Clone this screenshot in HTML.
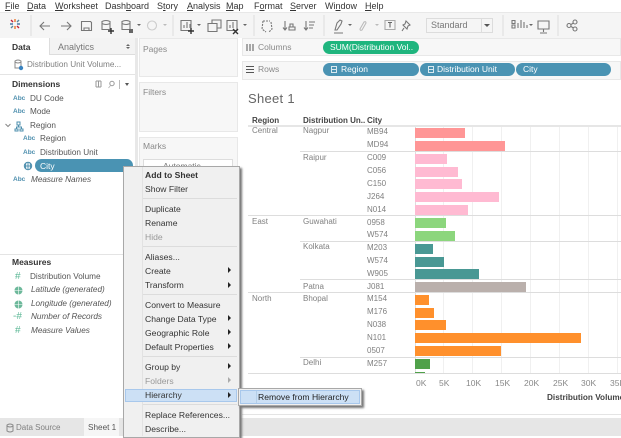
<!DOCTYPE html>
<html><head><meta charset="utf-8">
<style>
html,body{margin:0;padding:0}
body{width:621px;height:436px;position:relative;overflow:hidden;background:#fff;font-family:"Liberation Sans",sans-serif;font-size:9px;color:#555}
.a,.t,.b,.l{position:absolute}
.t{white-space:nowrap;line-height:12px;height:12px}
.m{color:#333;font-size:9px}
.u{text-decoration:underline}
.c{color:#808080;font-size:8px}
.h{color:#444;font-weight:bold;font-size:8px}
.b{height:10px;left:415px}
.l{height:1px;background:#ddd}
.g{position:absolute;top:126px;width:1px;height:247px;background:#f0f0f0}
.p{position:absolute;background:#f7f7f7;border:1px solid #e8e8e8;box-sizing:border-box}
.k{color:#8a8a8a;font-size:8.500px}
.f{color:#555;font-size:8.200px}
.i{font-style:italic}
.ab{color:#4e8fae;font-size:6.500px;font-weight:bold}
.n{color:#5cb896;font-size:10px}
.mi{color:#333;font-size:8.600px;left:145px}
.ar{position:absolute;left:228px;width:0;height:0;border-left:3px solid #222;border-top:3px solid transparent;border-bottom:3px solid transparent}
.sp{position:absolute;left:143px;width:94px;height:1px;background:#dcdcdc}
.pill{position:absolute;height:13px;border-radius:7px;background:#4a93b3;color:#fff;font-size:8.500px;line-height:13px;white-space:nowrap}
.ax{color:#888;font-size:8.500px}
.dh{font-weight:bold;font-size:8.500px;color:#333}
</style></head><body>

<!-- menu bar -->
<div class="t m" style="left:5px;top:0"><span class="u">F</span>ile</div>
<div class="t m" style="left:27px;top:0"><span class="u">D</span>ata</div>
<div class="t m" style="left:55px;top:0"><span class="u">W</span>orksheet</div>
<div class="t m" style="left:105px;top:0">Dash<span class="u">b</span>oard</div>
<div class="t m" style="left:157px;top:0">S<span class="u">t</span>ory</div>
<div class="t m" style="left:187px;top:0"><span class="u">A</span>nalysis</div>
<div class="t m" style="left:226px;top:0"><span class="u">M</span>ap</div>
<div class="t m" style="left:254px;top:0">F<span class="u">o</span>rmat</div>
<div class="t m" style="left:290px;top:0"><span class="u">S</span>erver</div>
<div class="t m" style="left:325px;top:0">Wi<span class="u">n</span>dow</div>
<div class="t m" style="left:365px;top:0"><span class="u">H</span>elp</div>

<!-- toolbar -->
<div class="a" style="left:0;top:12px;width:621px;height:26px;background:#f5f5f5;border-top:1px solid #e8e8e8;box-sizing:border-box"></div>
<svg class="a" style="left:0;top:12px" width="621" height="26" viewBox="0 12 621 26" fill="none" stroke="#777" stroke-width="1.1">
<g stroke-width="1.400"><path d="M15 19v3M15 26v3" stroke="#e8762d"/><path d="M10 24h3M17 24h3" stroke="#4e79a7"/><path d="M11 20l2 2M17 26l2 2" stroke="#c72037"/><path d="M19 20l-2 2M13 26l-2 2" stroke="#59879b"/></g>
<path d="M31 15v21M173 15v21M254 15v21M324 15v21M503 15v21M558 15v21" stroke="#ddd" stroke-width="1"/>
<path d="M40 26h10M44 22l-4 4 4 4"/><path d="M61 26h10M67 22l4 4-4 4"/>
<path d="M81.500 21.500h9l1 1v8h-10zM84 31v-3h5v3"/>
<path d="M102 21.500q4-2 8 0v8h-8zM102 23.500q4 2 8 0"/><path d="M108 31h6M111 28v6" stroke="#333" stroke-width="1.400"/>
<path d="M122 21.500q4-2 8 0v8h-8zM122 23.500q4 2 8 0"/><path d="M129 29h4v4h-4z" fill="#666" stroke="none"/>
<path d="M137 24h4l-2 2z" fill="#666" stroke="none"/>
<circle cx="152" cy="25.500" r="4.500" stroke="#ccc"/><path d="M163 24h4l-2 2z" fill="#bbb" stroke="none"/>
<path d="M181 20.500h10v10h-10zM184 28v-3M187 28v-6M190 28v-4"/><path d="M188 31h6M191 28v6" stroke="#333" stroke-width="1.400"/>
<path d="M197 24h4l-2 2z" fill="#666" stroke="none"/>
<path d="M208 23.500h9v8h-9zM212 23v-3h9v8h-4"/>
<path d="M227 20.500h10v10h-10zM230 28v-3M233 28v-6"/><path d="M233 29l5 5M238 29l-5 5" stroke="#333" stroke-width="1.400"/>
<path d="M243 24h4l-2 2z" fill="#666" stroke="none"/>
<path d="M263 21h7M263 21l-1 8 4 3M271 22l1 7-3 3" stroke-dasharray="2 1"/>
<path d="M285 21v9M283 27.500l2 2.500 2-2.500M289 30h6v-3h-6zM290 27v-3h3v3"/>
<path d="M306 21v9M304 27.500l2 2.500 2-2.500M309 22h6M309 25h5M309 28h4"/>
<path d="M335 30l2-7 3-3 2 1-1 3-4 6zM334 33h9"/><path d="M348 24h4l-2 2z" fill="#666" stroke="none"/>
<path d="M360 29l4-7q2-1 2 1l-4 7q-2 1-2-1z" stroke="#bbb"/><path d="M375 24h4l-2 2z" fill="#bbb" stroke="none"/>
<path d="M385 20.500h10v9h-10z" stroke="#aaa"/><path d="M388 22.500h4M390 22.500v5" stroke="#666"/>
<path d="M406 21l4 4-2 1-1 3-4-4 2-1zM404 28l-2 3"/>
<path d="M512 20.500h3v3h-3zM512 25h3v3h-3zM518 28v-5M521 28v-8M524 28v-6M527 28v-3"/><path d="M529 24h4l-2 2z" fill="#666" stroke="none"/>
<path d="M538 21h11v8h-11zM543.500 29v3M540 33h7"/>
<circle cx="569" cy="25.500" r="2"/><circle cx="575" cy="22" r="2"/><circle cx="575" cy="29" r="2"/><path d="M571 24.500l2.500-1.500M571 26.500l2.500 1.500"/>
</svg>
<div class="a" style="left:426px;top:18px;width:67px;height:15px;background:#f5f5f5;border:1px solid #dcdcdc;box-sizing:border-box"></div>
<div class="t" style="left:431px;top:19px;font-size:9px;color:#777">Standard</div>
<div class="a" style="left:481px;top:19px;width:1px;height:13px;background:#ddd"></div>
<div class="a" style="left:484px;top:24px;width:0;height:0;border:3px solid transparent;border-top:3px solid #555"></div>

<!-- left pane -->
<div class="a" style="left:0;top:38px;width:135px;height:380px;background:#fff"></div>
<div class="a" style="left:49px;top:38px;width:86px;height:17px;background:#f3f3f3;border-left:1px solid #ddd;border-bottom:1px solid #ddd;box-sizing:border-box"></div>
<div class="t dh" style="left:12px;top:41px">Data</div>
<div class="t" style="left:58px;top:41px;font-size:9px;color:#777">Analytics</div>
<div class="a" style="left:126px;top:42px;width:0;height:0;border:2px solid transparent;border-bottom:2px solid #666"></div>
<div class="a" style="left:126px;top:47px;width:0;height:0;border:2px solid transparent;border-top:2px solid #666"></div>
<svg class="a" style="left:14px;top:58px" width="10" height="13" fill="none" stroke="#888"><path d="M1 3q3-2 6 0v7H1zM1 4q3 2 6 0"/><circle cx="7" cy="10" r="2.200" fill="#3a83c0" stroke="none"/></svg>
<div class="t" style="left:27px;top:59px;color:#808080;font-size:8.200px">Distribution Unit Volume...</div>
<div class="a" style="left:0;top:74px;width:135px;height:1px;background:#e4e4e4"></div>
<div class="a" style="left:135px;top:38px;width:3px;height:380px;background:#e8e8e8"></div>

<div class="t dh" style="left:12px;top:78px">Dimensions</div>
<svg class="a" style="left:95px;top:80px" width="40" height="9" fill="none" stroke="#999"><path d="M1 1v6M3.500 1v6M6 1v6M1 1h5M1 7h5"/><circle cx="17" cy="3.500" r="2.200"/><path d="M15.500 5.500l-2 2.500M24.500 0v9" stroke="#bbb"/></svg>
<div class="a" style="left:125px;top:83px;width:0;height:0;border:2.500px solid transparent;border-top:3px solid #555"></div>

<div class="t ab" style="left:13px;top:93px">Abc</div><div class="t f" style="left:30px;top:93px">DU Code</div>
<div class="t ab" style="left:13px;top:106px">Abc</div><div class="t f" style="left:30px;top:106px">Mode</div>
<svg class="a" style="left:4px;top:120px" width="20" height="12" fill="none" stroke="#4e8fae"><path d="M1.500 4l2.500 2.500L6.500 4" stroke="#888"/><path d="M13 2h3v3h-3zM11 9h3v2h-3zM16 9h3v2h-3zM14.500 5v2M12.500 9V7h5v2"/></svg>
<div class="t f" style="left:30px;top:120px">Region</div>
<div class="t ab" style="left:23px;top:133px">Abc</div><div class="t f" style="left:40px;top:133px">Region</div>
<div class="t ab" style="left:23px;top:147px">Abc</div><div class="t f" style="left:40px;top:147px">Distribution Unit</div>
<svg class="a" style="left:23px;top:161px" width="10" height="10" fill="none" stroke="#4e8fae"><circle cx="5" cy="5" r="3.700"/><path d="M1 5h8M5 1v8M3 2q-1 3 0 6M7 2q1 3 0 6"/></svg>
<div class="a" style="left:35px;top:159px;width:98px;height:13px;border-radius:7px;background:#4a93b3"></div>
<div class="t" style="left:40px;top:160px;color:#fff;font-size:8.500px">City</div>
<div class="t ab" style="left:13px;top:174px">Abc</div><div class="t f i" style="left:31px;top:174px">Measure Names</div>

<div class="a" style="left:0;top:254px;width:135px;height:1px;background:#e4e4e4"></div>
<div class="t dh" style="left:12px;top:256px">Measures</div>
<div class="t n" style="left:15px;top:271px">#</div><div class="t f" style="left:30px;top:271px">Distribution Volume</div>
<svg class="a" style="left:14px;top:286px" width="9" height="9" fill="#6cb89a" stroke="#fff" stroke-width=".6"><circle cx="4.500" cy="4.500" r="4" stroke="none"/><path d="M.5 4.500h8M4.500.5v8" fill="none"/></svg>
<div class="t f i" style="left:31px;top:284px">Latitude (generated)</div>
<svg class="a" style="left:14px;top:300px" width="9" height="9" fill="#6cb89a" stroke="#fff" stroke-width=".6"><circle cx="4.500" cy="4.500" r="4" stroke="none"/><path d="M.5 4.500h8M4.500.5v8" fill="none"/></svg>
<div class="t f i" style="left:31px;top:298px">Longitude (generated)</div>
<div class="t n" style="left:13px;top:311px">-#</div><div class="t f i" style="left:31px;top:311px">Number of Records</div>
<div class="t n" style="left:15px;top:325px">#</div><div class="t f i" style="left:31px;top:325px">Measure Values</div>

<!-- bottom bar -->
<div class="a" style="left:0;top:418px;width:621px;height:18px;background:#e6e6e6"></div>
<div class="a" style="left:84px;top:418px;width:35px;height:18px;background:#f6f6f6"></div>
<svg class="a" style="left:6px;top:423px" width="8" height="10" fill="none" stroke="#888"><path d="M1 2q3-2 6 0v6q-3 2-6 0zM1 3q3 2 6 0"/></svg>
<div class="t" style="left:16px;top:422px;color:#808080;font-size:8px">Data Source</div>
<div class="t" style="left:88px;top:422px;color:#555;font-size:8.200px">Sheet 1</div>

<!-- shelves -->
<div class="p" style="left:139px;top:38px;width:99px;height:39px"></div>
<div class="t k" style="left:143px;top:43px">Pages</div>
<div class="p" style="left:139px;top:82px;width:99px;height:50px"></div>
<div class="t k" style="left:143px;top:86px">Filters</div>
<div class="p" style="left:139px;top:137px;width:99px;height:100px"></div>
<div class="t k" style="left:143px;top:140px">Marks</div>
<div class="a" style="left:143px;top:159px;width:90px;height:12px;background:#fff;border:1px solid #ddd;box-sizing:border-box"></div>
<div class="t" style="left:163px;top:160px;font-size:8.500px;color:#777">Automatic</div>

<div class="p" style="left:242px;top:38px;width:379px;height:18px"></div>
<svg class="a" style="left:246px;top:43px" width="8" height="8" stroke="#555"><path d="M1 1v7M4 1v7M7 1v7"/></svg>
<div class="t k" style="left:258px;top:41px">Columns</div>
<div class="pill" style="left:323px;top:41px;width:96px;background:#1fb57e;padding-left:7px;box-sizing:border-box">SUM(Distribution Vol..</div>
<div class="p" style="left:242px;top:61px;width:379px;height:19px"></div>
<svg class="a" style="left:246px;top:65px" width="8" height="8" stroke="#555"><path d="M0 1.500h8M0 4.500h8M0 7.500h8"/></svg>
<div class="t k" style="left:258px;top:63px">Rows</div>
<div class="pill" style="left:323px;top:63px;width:96px;padding-left:18px;box-sizing:border-box">Region</div>
<div class="pill" style="left:420px;top:63px;width:95px;padding-left:17px;box-sizing:border-box">Distribution Unit</div>
<div class="pill" style="left:516px;top:63px;width:95px;padding-left:7px;box-sizing:border-box">City</div>
<svg class="a" style="left:331px;top:66px" width="110" height="8" fill="none" stroke="#d8e8ef"><path d="M.5.5h5v6h-5zM.5 3.500h5M97.500.5h5v6h-5zM97.500 3.500h5"/></svg>

<!-- sheet -->
<div class="t" style="left:248px;top:91px;font-size:13px;color:#666;line-height:16px;height:16px;letter-spacing:.3px">Sheet 1</div>
<div class="t h" style="left:252px;top:115px">Region</div>
<div class="t h" style="left:303px;top:115px">Distribution Un..</div>
<div class="t h" style="left:367px;top:115px">City</div>

<div class="g" style="left:415px;background:#ddd"></div>
<div class="g" style="left:443px"></div><div class="g" style="left:472px"></div><div class="g" style="left:501px"></div><div class="g" style="left:530px"></div><div class="g" style="left:559px"></div><div class="g" style="left:588px"></div><div class="g" style="left:617px"></div>

<div class="l" style="left:248px;top:125px;width:373px;height:2px;background:#e6e6e6"></div>
<div class="l" style="left:300px;top:151px;width:321px"></div>
<div class="l" style="left:248px;top:215px;width:373px"></div>
<div class="l" style="left:300px;top:241px;width:321px"></div>
<div class="l" style="left:300px;top:279px;width:321px"></div>
<div class="l" style="left:248px;top:292px;width:373px"></div>
<div class="l" style="left:300px;top:357px;width:321px"></div>
<div class="l" style="left:248px;top:373px;width:373px"></div>

<div class="t c" style="left:252px;top:125px">Central</div>
<div class="t c" style="left:303px;top:125px">Nagpur</div>
<div class="t c" style="left:303px;top:152px">Raipur</div>
<div class="t c" style="left:252px;top:216px">East</div>
<div class="t c" style="left:303px;top:216px">Guwahati</div>
<div class="t c" style="left:303px;top:241px">Kolkata</div>
<div class="t c" style="left:303px;top:281px">Patna</div>
<div class="t c" style="left:252px;top:293px">North</div>
<div class="t c" style="left:303px;top:293px">Bhopal</div>
<div class="t c" style="left:303px;top:357px">Delhi</div>

<div class="t c" style="left:367px;top:126px">MB94</div><div class="b" style="top:128px;width:50px;background:#ff9696"></div>
<div class="t c" style="left:367px;top:139px">MD94</div><div class="b" style="top:141px;width:90px;background:#ff9696"></div>
<div class="t c" style="left:367px;top:152px">C009</div><div class="b" style="top:154px;width:32px;background:#ffbad2"></div>
<div class="t c" style="left:367px;top:165px">C056</div><div class="b" style="top:167px;width:43px;background:#ffbad2"></div>
<div class="t c" style="left:367px;top:178px">C150</div><div class="b" style="top:179px;width:47px;background:#ffbad2"></div>
<div class="t c" style="left:367px;top:191px">J264</div><div class="b" style="top:192px;width:84px;background:#ffbad2"></div>
<div class="t c" style="left:367px;top:204px">N014</div><div class="b" style="top:205px;width:53px;background:#ffbad2"></div>
<div class="t c" style="left:367px;top:217px">0958</div><div class="b" style="top:218px;width:31px;background:#8cd67d"></div>
<div class="t c" style="left:367px;top:229px">W574</div><div class="b" style="top:231px;width:40px;background:#8cd67d"></div>
<div class="t c" style="left:367px;top:242px">M203</div><div class="b" style="top:244px;width:18px;background:#499894"></div>
<div class="t c" style="left:367px;top:255px">W574</div><div class="b" style="top:257px;width:29px;background:#499894"></div>
<div class="t c" style="left:367px;top:268px">W905</div><div class="b" style="top:269px;width:64px;background:#499894"></div>
<div class="t c" style="left:367px;top:281px">J081</div><div class="b" style="top:282px;width:111px;background:#bab0ac"></div>
<div class="t c" style="left:367px;top:293px">M154</div><div class="b" style="top:295px;width:14px;background:#ff902c"></div>
<div class="t c" style="left:367px;top:306px">M176</div><div class="b" style="top:308px;width:19px;background:#ff902c"></div>
<div class="t c" style="left:367px;top:319px">N038</div><div class="b" style="top:320px;width:31px;background:#ff902c"></div>
<div class="t c" style="left:367px;top:332px">N101</div><div class="b" style="top:333px;width:166px;background:#ff902c"></div>
<div class="t c" style="left:367px;top:345px">0507</div><div class="b" style="top:346px;width:86px;background:#ff902c"></div>
<div class="t c" style="left:367px;top:358px">M257</div><div class="b" style="top:359px;width:15px;background:#50a14a"></div>
<div class="b" style="top:372px;width:10px;height:1px;background:#50a14a"></div>

<div class="t ax" style="left:416px;top:377px">0K</div>
<div class="t ax" style="left:439px;top:377px">5K</div>
<div class="t ax" style="left:466px;top:377px">10K</div>
<div class="t ax" style="left:495px;top:377px">15K</div>
<div class="t ax" style="left:524px;top:377px">20K</div>
<div class="t ax" style="left:553px;top:377px">25K</div>
<div class="t ax" style="left:581px;top:377px">30K</div>
<div class="t ax" style="left:610px;top:377px">35K</div>
<div class="t h" style="left:547px;top:392px;font-size:8.200px">Distribution Volume</div>
<div class="a" style="left:242px;top:414px;width:379px;height:1px;background:#e4e4e4"></div>

<!-- context menu -->
<div class="a" style="left:123px;top:166px;width:117px;height:272px;background:#f0f0f0;border:1px solid #a8a8a8;box-sizing:border-box;box-shadow:2px 2px 2px #777"></div>
<div class="a" style="left:142px;top:167px;width:1px;height:269px;background:#e2e2e2"></div>
<div class="t mi" style="top:169px;font-weight:bold">Add to Sheet</div>
<div class="t mi" style="top:183px">Show Filter</div>
<div class="sp" style="top:198px"></div>
<div class="t mi" style="top:203px">Duplicate</div>
<div class="t mi" style="top:217px">Rename</div>
<div class="t mi" style="top:231px;color:#999">Hide</div>
<div class="sp" style="top:246px"></div>
<div class="t mi" style="top:251px">Aliases...</div>
<div class="t mi" style="top:265px">Create</div><div class="ar" style="top:267px"></div>
<div class="t mi" style="top:279px">Transform</div><div class="ar" style="top:282px"></div>
<div class="sp" style="top:294px"></div>
<div class="t mi" style="top:299px">Convert to Measure</div>
<div class="t mi" style="top:313px">Change Data Type</div><div class="ar" style="top:315px"></div>
<div class="t mi" style="top:327px">Geographic Role</div><div class="ar" style="top:329px"></div>
<div class="t mi" style="top:341px">Default Properties</div><div class="ar" style="top:343px"></div>
<div class="sp" style="top:356px"></div>
<div class="t mi" style="top:361px">Group by</div><div class="ar" style="top:363px"></div>
<div class="t mi" style="top:375px;color:#999">Folders</div><div class="ar" style="top:377px;border-left-color:#aaa"></div>
<div class="a" style="left:125px;top:389px;width:112px;height:13px;background:#cce0f5;border:1px solid #a8c8ec;box-sizing:border-box"></div>
<div class="t mi" style="top:389px">Hierarchy</div><div class="ar" style="top:392px"></div>
<div class="sp" style="top:404px"></div>
<div class="t mi" style="top:409px">Replace References...</div>
<div class="t mi" style="top:423px">Describe...</div>

<!-- submenu -->
<div class="a" style="left:238px;top:388px;width:124px;height:18px;background:#f0f0f0;border:1px solid #a8a8a8;box-sizing:border-box;box-shadow:2px 2px 2px #777"></div>
<div class="a" style="left:240px;top:390px;width:120px;height:14px;background:#cce0f5;border:1px solid #a8c8ec;box-sizing:border-box"></div>
<div class="a" style="left:256px;top:391px;width:1px;height:12px;background:#b4cfe8"></div>
<div class="t" style="left:258px;top:391px;font-size:8.600px;color:#222">Remove from Hierarchy</div>
</body></html>
